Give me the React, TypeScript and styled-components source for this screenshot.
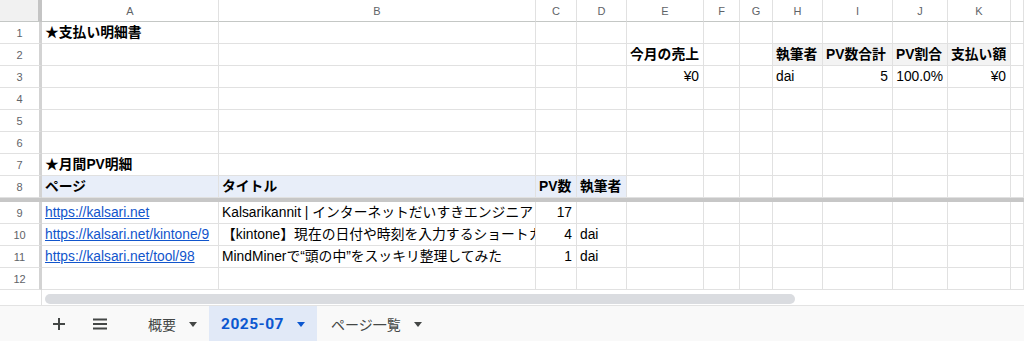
import React from "react";
import styled, { createGlobalStyle } from "styled-components";

const GlobalStyle = createGlobalStyle`
  html, body { margin: 0; padding: 0; background: #ffffff; }
  body { font-family: "Liberation Sans", "Noto Sans CJK JP", sans-serif; }
  * { box-sizing: border-box; }
`;

type Align = "left" | "right" | "center";
interface CellDef {
  text: string;
  bold?: boolean;
  align?: Align;
  link?: boolean;
  bg?: string;
}

const COLS = [
  { key: "A", w: 177 },
  { key: "B", w: 317 },
  { key: "C", w: 41 },
  { key: "D", w: 50 },
  { key: "E", w: 77 },
  { key: "F", w: 36 },
  { key: "G", w: 33 },
  { key: "H", w: 50 },
  { key: "I", w: 70 },
  { key: "J", w: 55 },
  { key: "K", w: 63 },
  { key: "L", w: 0 },
];

const HEAD_GRAY = "#f3f3f3";
const HEAD_BLUE = "#e8eef9";

const DATA: Record<number, Record<string, CellDef>> = {
  1: { A: { text: "★支払い明細書", bold: true } },
  2: {
    E: { text: "今月の売上", bold: true },
    H: { text: "執筆者", bold: true, bg: HEAD_GRAY },
    I: { text: "PV数合計", bold: true, bg: HEAD_GRAY },
    J: { text: "PV割合", bold: true, bg: HEAD_GRAY },
    K: { text: "支払い額", bold: true, bg: HEAD_GRAY },
  },
  3: {
    E: { text: "¥0", align: "right" },
    H: { text: "dai" },
    I: { text: "5", align: "right" },
    J: { text: "100.0%", align: "right" },
    K: { text: "¥0", align: "right" },
  },
  7: { A: { text: "★月間PV明細", bold: true } },
  8: {
    A: { text: "ページ", bold: true, bg: HEAD_BLUE },
    B: { text: "タイトル", bold: true, bg: HEAD_BLUE },
    C: { text: "PV数", bold: true, bg: HEAD_BLUE },
    D: { text: "執筆者", bold: true, bg: HEAD_BLUE },
  },
  9: {
    A: { text: "https://kalsari.net", link: true },
    B: { text: "Kalsarikannit | インターネットだいすきエンジニア" },
    C: { text: "17", align: "right" },
  },
  10: {
    A: { text: "https://kalsari.net/kintone/9", link: true },
    B: { text: "【kintone】現在の日付や時刻を入力するショートカット" },
    C: { text: "4", align: "right" },
    D: { text: "dai" },
  },
  11: {
    A: { text: "https://kalsari.net/tool/98", link: true },
    B: { text: "MindMinerで“頭の中”をスッキリ整理してみた" },
    C: { text: "1", align: "right" },
    D: { text: "dai" },
  },
};

const Page = styled.div`
  width: 1024px;
  height: 341px;
  display: flex;
  flex-direction: column;
  overflow: hidden;
  background: #ffffff;
`;

const Grid = styled.div`
  display: grid;
  grid-template-columns: 42px ${COLS.slice(0, -1)
      .map((c) => `${c.w}px`)
      .join(" ")} 1fr;
  grid-auto-rows: auto;
`;

const Corner = styled.div`
  height: 22px;
  background: #f1f1f1;
  border-right: 4px solid #c4c4c4;
  border-bottom: 1px solid #c4c7c5;
`;

const ColHead = styled.div`
  height: 22px;
  display: flex;
  align-items: center;
  justify-content: center;
  font-family: "Liberation Sans", sans-serif;
  font-size: 11px;
  color: #5f6368;
  background: #ffffff;
  border-right: 1px solid #e1e1e1;
  border-bottom: 1px solid #c4c7c5;
`;

const RowHead = styled.div`
  height: 22px;
  display: flex;
  align-items: center;
  justify-content: center;
  font-family: "Liberation Sans", sans-serif;
  font-size: 11px;
  color: #5f6368;
  background: #ffffff;
  border-right: 3px solid #d3d3d3;
  border-bottom: 1px solid #e1e1e1;
`;

const Cell = styled.div<{ $align: Align; $bold: boolean; $bg?: string }>`
  height: 22px;
  padding: 0 4px 0 3px;
  line-height: 21px;
  font-size: 13.8px;
  color: #000000;
  white-space: nowrap;
  overflow: hidden;
  text-align: ${(p) => p.$align};
  font-weight: ${(p) => (p.$bold ? 700 : 400)};
  background: ${(p) => p.$bg ?? "#ffffff"};
  border-right: 1px solid #e1e1e1;
  border-bottom: 1px solid #e1e1e1;
`;

const Link = styled.a`
  color: #1155cc;
  text-decoration: underline;
`;

const FrozenBar = styled.div`
  grid-column: 1 / -1;
  height: 4px;
  background: #c7c7c7;
`;

const ScrollRow = styled.div`
  height: 16px;
  display: flex;
  border-bottom: 1px solid #e3e3e3;
`;

const ScrollStub = styled.div`
  width: 42px;
  border-right: 1px solid #e1e1e1;
`;

const ScrollTrack = styled.div`
  flex: 1;
  padding: 4px 3px 0 3px;
`;

const Thumb = styled.div`
  width: 750px;
  height: 10px;
  border-radius: 5px;
  background: #dadce0;
`;

const TabBar = styled.div`
  flex: 1;
  display: flex;
  align-items: stretch;
  background: #f9f9f9;
  padding-left: 41px;
  font-family: "Roboto", "Noto Sans CJK JP", sans-serif;
`;

const IconButton = styled.div`
  width: 36px;
  display: flex;
  align-items: center;
  justify-content: center;
  color: #444746;
  & + & {
    margin-left: 5px;
  }
`;

const TabList = styled.div`
  display: flex;
  align-items: stretch;
  margin-left: 16px;
`;

const Tab = styled.div<{ $active?: boolean }>`
  display: flex;
  align-items: center;
  gap: 13px;
  padding: 0 12px 0 ${(p) => (p.$active ? 12 : 14)}px;
  font-size: ${(p) => (p.$active ? "15.5px" : "14px")};
  font-weight: ${(p) => (p.$active ? 700 : 400)};
  letter-spacing: ${(p) => (p.$active ? "0.5px" : "0")};
  color: ${(p) => (p.$active ? "#0b57d0" : "#444746")};
  background: ${(p) => (p.$active ? "#e1e9f7" : "transparent")};
`;

const Caret = styled.span<{ $active?: boolean }>`
  width: 0;
  height: 0;
  border-left: 4.5px solid transparent;
  border-right: 4.5px solid transparent;
  border-top: 5px solid ${(p) => (p.$active ? "#0b57d0" : "#444746")};
  margin-top: 1px;
`;

function renderCell(row: number, col: string) {
  const def = DATA[row]?.[col];
  if (!def) return <Cell key={col} $align="left" $bold={false} />;
  return (
    <Cell key={col} $align={def.align ?? "left"} $bold={!!def.bold} $bg={def.bg}>
      {def.link ? <Link href="#">{def.text}</Link> : def.text}
    </Cell>
  );
}

function renderRow(row: number) {
  return (
    <React.Fragment key={row}>
      <RowHead>{row}</RowHead>
      {COLS.map((c) => renderCell(row, c.key))}
    </React.Fragment>
  );
}

export default function App() {
  return (
    <>
      <GlobalStyle />
      <Page>
        <Grid>
          <Corner />
          {COLS.map((c) => (
            <ColHead key={c.key}>{c.key === "L" ? "" : c.key}</ColHead>
          ))}
          {[1, 2, 3, 4, 5, 6, 7, 8].map(renderRow)}
          <FrozenBar />
          {[9, 10, 11, 12].map(renderRow)}
        </Grid>
        <ScrollRow>
          <ScrollStub />
          <ScrollTrack>
            <Thumb />
          </ScrollTrack>
        </ScrollRow>
        <TabBar>
          <IconButton>
            <svg width="14" height="14" viewBox="0 0 14 14">
              <path d="M7 1v12M1 7h12" stroke="currentColor" strokeWidth="2" fill="none" />
            </svg>
          </IconButton>
          <IconButton>
            <svg width="16" height="14" viewBox="0 0 16 14">
              <path d="M1 2.5h14M1 7h14M1 11.5h14" stroke="currentColor" strokeWidth="2" fill="none" />
            </svg>
          </IconButton>
          <TabList>
            <Tab>
              概要
              <Caret />
            </Tab>
            <Tab $active>
              2025-07
              <Caret $active />
            </Tab>
            <Tab>
              ページ一覧
              <Caret />
            </Tab>
          </TabList>
        </TabBar>
      </Page>
    </>
  );
}
